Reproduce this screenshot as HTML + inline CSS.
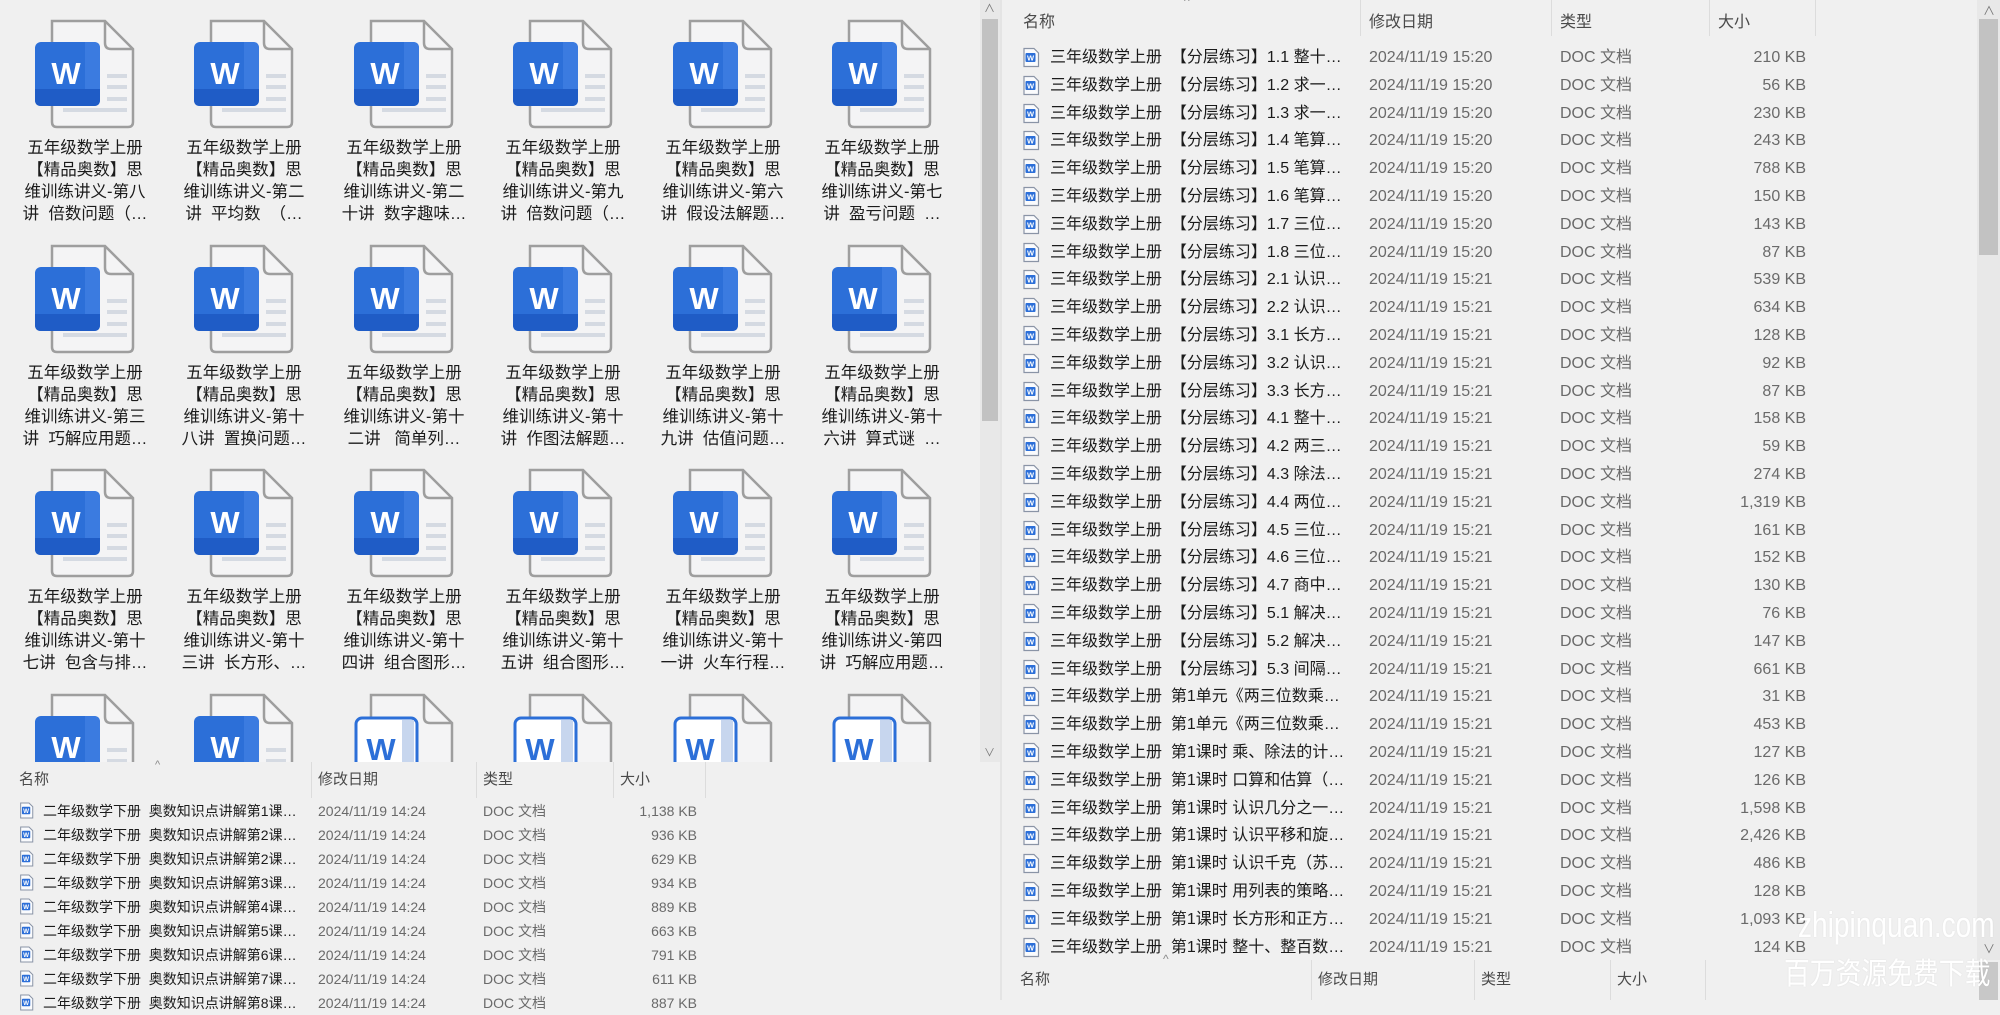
<!DOCTYPE html>
<html><head><meta charset="utf-8">
<style>
*{margin:0;padding:0;box-sizing:border-box}
body{width:2000px;height:1000px;overflow:hidden;background:#f0f0f0;font-family:"Liberation Sans","Noto Sans CJK SC",sans-serif;color:#1b1b1b;position:relative}
.a{position:absolute}
.ic{position:absolute;width:100px;height:110px}
.lb{position:absolute;width:150px;text-align:center;font-size:16.5px;line-height:22px;white-space:pre;color:#1b1b1b}
.r{position:absolute;font-size:16px;line-height:27.8px;white-space:pre}
.rb{position:absolute;height:24px;font-size:14px;line-height:24px;white-space:pre}
.g{color:#6a6a6a}
.hd{position:absolute;font-size:15px;color:#4a4a4a}
.sep{position:absolute;width:1px;background:#dcdcdc}
.si{position:absolute;width:18px;height:21px}
</style></head><body>
<svg width="0" height="0" style="position:absolute">
<defs>
<symbol id="big" viewBox="0 0 100 110">
<path d="M17 2 H70 L98 30 V103 Q98 108 93 108 H22 Q17 108 17 103 Z" fill="#f4f4f5" stroke="#9e9e9e" stroke-width="2.5"/>
<path d="M70 2 V24 Q70 30 76 30 H98" fill="none" stroke="#9e9e9e" stroke-width="2.5"/>
<path d="M72 57 H92 M72 68 H92 M72 80 H92 M28 91 H92" stroke="#d5dae2" stroke-width="4"/>
<rect x="0" y="23" width="65" height="64" rx="6" fill="#2c6fd8"/>
<path d="M0 70 H65 V81 Q65 87 59 87 H6 Q0 87 0 81 Z" fill="#1f5cc6"/>
<path d="M50 23 H59 Q65 23 65 29 V70 H50 Z" fill="#3b7be0"/>
<text x="31" y="65" font-family="Liberation Sans" font-weight="bold" font-size="31" fill="#fff" text-anchor="middle">W</text>
</symbol>
<symbol id="big2" viewBox="0 0 100 110">
<path d="M17 2 H70 L98 30 V103 Q98 108 93 108 H22 Q17 108 17 103 Z" fill="#f4f4f5" stroke="#9e9e9e" stroke-width="2.5"/>
<path d="M70 2 V24 Q70 30 76 30 H98" fill="none" stroke="#9e9e9e" stroke-width="2.5"/>
<rect x="2" y="25" width="61" height="62" rx="6" fill="#fff" stroke="#2c6fd8" stroke-width="3"/>
<rect x="48" y="27" width="12" height="58" fill="#c7d6ee"/>
<text x="27" y="67" font-family="Liberation Sans" font-weight="bold" font-size="31" fill="#2c6fd8" text-anchor="middle">W</text>
</symbol>
<symbol id="sm" viewBox="0 0 18 21">
<path d="M2 1.5 H12 L16.5 6 V19.5 H2 Z" fill="#fafbfd" stroke="#8a94a6" stroke-width="1.2"/>
<rect x="3.5" y="6" width="10" height="9" rx="1" fill="#2c6fd8"/>
<text x="8.5" y="13.5" font-family="Liberation Sans" font-weight="bold" font-size="7.5" fill="#fff" text-anchor="middle">W</text>
</symbol>
</defs></svg>

<div class="a" style="left:0;top:0;width:980px;height:762px;overflow:hidden;background:#f0f0f0">
<svg class="ic" style="left:35px;top:19px"><use href="#big"/></svg>
<svg class="ic" style="left:194px;top:19px"><use href="#big"/></svg>
<svg class="ic" style="left:354px;top:19px"><use href="#big"/></svg>
<svg class="ic" style="left:513px;top:19px"><use href="#big"/></svg>
<svg class="ic" style="left:673px;top:19px"><use href="#big"/></svg>
<svg class="ic" style="left:832px;top:19px"><use href="#big"/></svg>
<svg class="ic" style="left:35px;top:244px"><use href="#big"/></svg>
<svg class="ic" style="left:194px;top:244px"><use href="#big"/></svg>
<svg class="ic" style="left:354px;top:244px"><use href="#big"/></svg>
<svg class="ic" style="left:513px;top:244px"><use href="#big"/></svg>
<svg class="ic" style="left:673px;top:244px"><use href="#big"/></svg>
<svg class="ic" style="left:832px;top:244px"><use href="#big"/></svg>
<svg class="ic" style="left:35px;top:468px"><use href="#big"/></svg>
<svg class="ic" style="left:194px;top:468px"><use href="#big"/></svg>
<svg class="ic" style="left:354px;top:468px"><use href="#big"/></svg>
<svg class="ic" style="left:513px;top:468px"><use href="#big"/></svg>
<svg class="ic" style="left:673px;top:468px"><use href="#big"/></svg>
<svg class="ic" style="left:832px;top:468px"><use href="#big"/></svg>
<svg class="ic" style="left:35px;top:693px"><use href="#big"/></svg>
<svg class="ic" style="left:194px;top:693px"><use href="#big"/></svg>
<svg class="ic" style="left:354px;top:693px"><use href="#big2"/></svg>
<svg class="ic" style="left:513px;top:693px"><use href="#big2"/></svg>
<svg class="ic" style="left:673px;top:693px"><use href="#big2"/></svg>
<svg class="ic" style="left:832px;top:693px"><use href="#big2"/></svg>

<div class="lb" style="left:10px;top:137px">五年级数学上册
【精品奥数】思
维训练讲义-第八
讲  倍数问题（…</div>
<div class="lb" style="left:169px;top:137px">五年级数学上册
【精品奥数】思
维训练讲义-第二
讲  平均数  （…</div>
<div class="lb" style="left:329px;top:137px">五年级数学上册
【精品奥数】思
维训练讲义-第二
十讲  数字趣味…</div>
<div class="lb" style="left:488px;top:137px">五年级数学上册
【精品奥数】思
维训练讲义-第九
讲  倍数问题（…</div>
<div class="lb" style="left:648px;top:137px">五年级数学上册
【精品奥数】思
维训练讲义-第六
讲  假设法解题…</div>
<div class="lb" style="left:807px;top:137px">五年级数学上册
【精品奥数】思
维训练讲义-第七
讲  盈亏问题  …</div>

<div class="lb" style="left:10px;top:362px">五年级数学上册
【精品奥数】思
维训练讲义-第三
讲  巧解应用题…</div>
<div class="lb" style="left:169px;top:362px">五年级数学上册
【精品奥数】思
维训练讲义-第十
八讲  置换问题…</div>
<div class="lb" style="left:329px;top:362px">五年级数学上册
【精品奥数】思
维训练讲义-第十
二讲   简单列…</div>
<div class="lb" style="left:488px;top:362px">五年级数学上册
【精品奥数】思
维训练讲义-第十
讲  作图法解题…</div>
<div class="lb" style="left:648px;top:362px">五年级数学上册
【精品奥数】思
维训练讲义-第十
九讲  估值问题…</div>
<div class="lb" style="left:807px;top:362px">五年级数学上册
【精品奥数】思
维训练讲义-第十
六讲  算式谜  …</div>

<div class="lb" style="left:10px;top:586px">五年级数学上册
【精品奥数】思
维训练讲义-第十
七讲  包含与排…</div>
<div class="lb" style="left:169px;top:586px">五年级数学上册
【精品奥数】思
维训练讲义-第十
三讲  长方形、…</div>
<div class="lb" style="left:329px;top:586px">五年级数学上册
【精品奥数】思
维训练讲义-第十
四讲  组合图形…</div>
<div class="lb" style="left:488px;top:586px">五年级数学上册
【精品奥数】思
维训练讲义-第十
五讲  组合图形…</div>
<div class="lb" style="left:648px;top:586px">五年级数学上册
【精品奥数】思
维训练讲义-第十
一讲  火车行程…</div>
<div class="lb" style="left:807px;top:586px">五年级数学上册
【精品奥数】思
维训练讲义-第四
讲  巧解应用题…</div>
</div>
<div class="a" style="left:980px;top:0;width:20px;height:762px;background:#e8e8e8"></div>
<div class="a" style="left:982px;top:19px;width:16px;height:402px;background:#c2c2c2"></div>
<div class="a" style="left:984px;top:0;font-size:11px;color:#777">∧</div>
<div class="a" style="left:984px;top:744px;font-size:11px;color:#777">∨</div>

<div class="a" style="left:0;top:762px;width:1000px;height:238px;background:#f0f0f0"></div>
<div class="a" style="left:155px;top:759px;font-size:11px;color:#888">^</div>
<div class="hd" style="left:19px;top:768px">名称</div>
<div class="hd" style="left:318px;top:768px">修改日期</div>
<div class="hd" style="left:483px;top:768px">类型</div>
<div class="hd" style="left:620px;top:768px">大小</div>
<div class="sep" style="left:311px;top:762px;height:36px"></div>
<div class="sep" style="left:476px;top:762px;height:36px"></div>
<div class="sep" style="left:613px;top:762px;height:36px"></div>
<div class="sep" style="left:705px;top:762px;height:36px"></div>

<div class="a" style="left:0;top:799px">
<svg class="si" style="left:19px;top:2px;width:15px;height:19px"><use href="#sm"/></svg>
<svg class="si" style="left:19px;top:26px;width:15px;height:19px"><use href="#sm"/></svg>
<svg class="si" style="left:19px;top:50px;width:15px;height:19px"><use href="#sm"/></svg>
<svg class="si" style="left:19px;top:74px;width:15px;height:19px"><use href="#sm"/></svg>
<svg class="si" style="left:19px;top:98px;width:15px;height:19px"><use href="#sm"/></svg>
<svg class="si" style="left:19px;top:122px;width:15px;height:19px"><use href="#sm"/></svg>
<svg class="si" style="left:19px;top:146px;width:15px;height:19px"><use href="#sm"/></svg>
<svg class="si" style="left:19px;top:170px;width:15px;height:19px"><use href="#sm"/></svg>
<svg class="si" style="left:19px;top:194px;width:15px;height:19px"><use href="#sm"/></svg>
<div class="rb" style="left:43px;top:0">二年级数学下册  奥数知识点讲解第1课…</div>
<div class="rb" style="left:43px;top:24px">二年级数学下册  奥数知识点讲解第2课…</div>
<div class="rb" style="left:43px;top:48px">二年级数学下册  奥数知识点讲解第2课…</div>
<div class="rb" style="left:43px;top:72px">二年级数学下册  奥数知识点讲解第3课…</div>
<div class="rb" style="left:43px;top:96px">二年级数学下册  奥数知识点讲解第4课…</div>
<div class="rb" style="left:43px;top:120px">二年级数学下册  奥数知识点讲解第5课…</div>
<div class="rb" style="left:43px;top:144px">二年级数学下册  奥数知识点讲解第6课…</div>
<div class="rb" style="left:43px;top:168px">二年级数学下册  奥数知识点讲解第7课…</div>
<div class="rb" style="left:43px;top:192px">二年级数学下册  奥数知识点讲解第8课…</div>
<div class="rb g" style="left:318px;top:0">2024/11/19 14:24</div>
<div class="rb g" style="left:318px;top:24px">2024/11/19 14:24</div>
<div class="rb g" style="left:318px;top:48px">2024/11/19 14:24</div>
<div class="rb g" style="left:318px;top:72px">2024/11/19 14:24</div>
<div class="rb g" style="left:318px;top:96px">2024/11/19 14:24</div>
<div class="rb g" style="left:318px;top:120px">2024/11/19 14:24</div>
<div class="rb g" style="left:318px;top:144px">2024/11/19 14:24</div>
<div class="rb g" style="left:318px;top:168px">2024/11/19 14:24</div>
<div class="rb g" style="left:318px;top:192px">2024/11/19 14:24</div>
<div class="rb g" style="left:483px;top:0">DOC 文档</div>
<div class="rb g" style="left:483px;top:24px">DOC 文档</div>
<div class="rb g" style="left:483px;top:48px">DOC 文档</div>
<div class="rb g" style="left:483px;top:72px">DOC 文档</div>
<div class="rb g" style="left:483px;top:96px">DOC 文档</div>
<div class="rb g" style="left:483px;top:120px">DOC 文档</div>
<div class="rb g" style="left:483px;top:144px">DOC 文档</div>
<div class="rb g" style="left:483px;top:168px">DOC 文档</div>
<div class="rb g" style="left:483px;top:192px">DOC 文档</div>
<div class="rb g" style="left:597px;width:100px;text-align:right;top:0">1,138 KB</div>
<div class="rb g" style="left:597px;width:100px;text-align:right;top:24px">936 KB</div>
<div class="rb g" style="left:597px;width:100px;text-align:right;top:48px">629 KB</div>
<div class="rb g" style="left:597px;width:100px;text-align:right;top:72px">934 KB</div>
<div class="rb g" style="left:597px;width:100px;text-align:right;top:96px">889 KB</div>
<div class="rb g" style="left:597px;width:100px;text-align:right;top:120px">663 KB</div>
<div class="rb g" style="left:597px;width:100px;text-align:right;top:144px">791 KB</div>
<div class="rb g" style="left:597px;width:100px;text-align:right;top:168px">611 KB</div>
<div class="rb g" style="left:597px;width:100px;text-align:right;top:192px">887 KB</div>
</div>

<div class="a" style="left:1000px;top:0;width:2px;height:1000px;background:#e4e4e4"></div>
<div class="a" style="left:1184px;top:-6px;font-size:12px;color:#888">^</div>
<div class="hd" style="left:1023px;top:8px;font-size:16px">名称</div>
<div class="hd" style="left:1369px;top:8px;font-size:16px">修改日期</div>
<div class="hd" style="left:1560px;top:8px;font-size:16px">类型</div>
<div class="hd" style="left:1718px;top:8px;font-size:16px">大小</div>
<div class="sep" style="left:1360px;top:0;height:36px"></div>
<div class="sep" style="left:1551px;top:0;height:36px"></div>
<div class="sep" style="left:1709px;top:0;height:36px"></div>
<div class="sep" style="left:1815px;top:0;height:36px"></div>

<div class="a" style="left:0;top:44px">
<svg class="si" style="left:1022px;top:3px"><use href="#sm"/></svg>
<svg class="si" style="left:1022px;top:31px"><use href="#sm"/></svg>
<svg class="si" style="left:1022px;top:59px"><use href="#sm"/></svg>
<svg class="si" style="left:1022px;top:86px"><use href="#sm"/></svg>
<svg class="si" style="left:1022px;top:114px"><use href="#sm"/></svg>
<svg class="si" style="left:1022px;top:142px"><use href="#sm"/></svg>
<svg class="si" style="left:1022px;top:170px"><use href="#sm"/></svg>
<svg class="si" style="left:1022px;top:198px"><use href="#sm"/></svg>
<svg class="si" style="left:1022px;top:225px"><use href="#sm"/></svg>
<svg class="si" style="left:1022px;top:253px"><use href="#sm"/></svg>
<svg class="si" style="left:1022px;top:281px"><use href="#sm"/></svg>
<svg class="si" style="left:1022px;top:309px"><use href="#sm"/></svg>
<svg class="si" style="left:1022px;top:337px"><use href="#sm"/></svg>
<svg class="si" style="left:1022px;top:364px"><use href="#sm"/></svg>
<svg class="si" style="left:1022px;top:392px"><use href="#sm"/></svg>
<svg class="si" style="left:1022px;top:420px"><use href="#sm"/></svg>
<svg class="si" style="left:1022px;top:448px"><use href="#sm"/></svg>
<svg class="si" style="left:1022px;top:476px"><use href="#sm"/></svg>
<svg class="si" style="left:1022px;top:503px"><use href="#sm"/></svg>
<svg class="si" style="left:1022px;top:531px"><use href="#sm"/></svg>
<svg class="si" style="left:1022px;top:559px"><use href="#sm"/></svg>
<svg class="si" style="left:1022px;top:587px"><use href="#sm"/></svg>
<svg class="si" style="left:1022px;top:615px"><use href="#sm"/></svg>
<svg class="si" style="left:1022px;top:642px"><use href="#sm"/></svg>
<svg class="si" style="left:1022px;top:670px"><use href="#sm"/></svg>
<svg class="si" style="left:1022px;top:698px"><use href="#sm"/></svg>
<svg class="si" style="left:1022px;top:726px"><use href="#sm"/></svg>
<svg class="si" style="left:1022px;top:754px"><use href="#sm"/></svg>
<svg class="si" style="left:1022px;top:781px"><use href="#sm"/></svg>
<svg class="si" style="left:1022px;top:809px"><use href="#sm"/></svg>
<svg class="si" style="left:1022px;top:837px"><use href="#sm"/></svg>
<svg class="si" style="left:1022px;top:865px"><use href="#sm"/></svg>
<svg class="si" style="left:1022px;top:893px"><use href="#sm"/></svg>

<div class="r" style="left:1050px;top:0">三年级数学上册  【分层练习】1.1 整十…
三年级数学上册  【分层练习】1.2 求一…
三年级数学上册  【分层练习】1.3 求一…
三年级数学上册  【分层练习】1.4 笔算…
三年级数学上册  【分层练习】1.5 笔算…
三年级数学上册  【分层练习】1.6 笔算…
三年级数学上册  【分层练习】1.7 三位…
三年级数学上册  【分层练习】1.8 三位…
三年级数学上册  【分层练习】2.1 认识…
三年级数学上册  【分层练习】2.2 认识…
三年级数学上册  【分层练习】3.1 长方…
三年级数学上册  【分层练习】3.2 认识…
三年级数学上册  【分层练习】3.3 长方…
三年级数学上册  【分层练习】4.1 整十…
三年级数学上册  【分层练习】4.2 两三…
三年级数学上册  【分层练习】4.3 除法…
三年级数学上册  【分层练习】4.4 两位…
三年级数学上册  【分层练习】4.5 三位…
三年级数学上册  【分层练习】4.6 三位…
三年级数学上册  【分层练习】4.7 商中…
三年级数学上册  【分层练习】5.1 解决…
三年级数学上册  【分层练习】5.2 解决…
三年级数学上册  【分层练习】5.3 间隔…
三年级数学上册  第1单元《两三位数乘…
三年级数学上册  第1单元《两三位数乘…
三年级数学上册  第1课时 乘、除法的计…
三年级数学上册  第1课时 口算和估算（…
三年级数学上册  第1课时 认识几分之一…
三年级数学上册  第1课时 认识平移和旋…
三年级数学上册  第1课时 认识千克（苏…
三年级数学上册  第1课时 用列表的策略…
三年级数学上册  第1课时 长方形和正方…
三年级数学上册  第1课时 整十、整百数…</div>
<div class="r g" style="left:1369px;top:0">2024/11/19 15:20
2024/11/19 15:20
2024/11/19 15:20
2024/11/19 15:20
2024/11/19 15:20
2024/11/19 15:20
2024/11/19 15:20
2024/11/19 15:20
2024/11/19 15:21
2024/11/19 15:21
2024/11/19 15:21
2024/11/19 15:21
2024/11/19 15:21
2024/11/19 15:21
2024/11/19 15:21
2024/11/19 15:21
2024/11/19 15:21
2024/11/19 15:21
2024/11/19 15:21
2024/11/19 15:21
2024/11/19 15:21
2024/11/19 15:21
2024/11/19 15:21
2024/11/19 15:21
2024/11/19 15:21
2024/11/19 15:21
2024/11/19 15:21
2024/11/19 15:21
2024/11/19 15:21
2024/11/19 15:21
2024/11/19 15:21
2024/11/19 15:21
2024/11/19 15:21</div>
<div class="r g" style="left:1560px;top:0">DOC 文档
DOC 文档
DOC 文档
DOC 文档
DOC 文档
DOC 文档
DOC 文档
DOC 文档
DOC 文档
DOC 文档
DOC 文档
DOC 文档
DOC 文档
DOC 文档
DOC 文档
DOC 文档
DOC 文档
DOC 文档
DOC 文档
DOC 文档
DOC 文档
DOC 文档
DOC 文档
DOC 文档
DOC 文档
DOC 文档
DOC 文档
DOC 文档
DOC 文档
DOC 文档
DOC 文档
DOC 文档
DOC 文档</div>
<div class="r g" style="left:1700px;width:106px;text-align:right;top:0">210 KB
56 KB
230 KB
243 KB
788 KB
150 KB
143 KB
87 KB
539 KB
634 KB
128 KB
92 KB
87 KB
158 KB
59 KB
274 KB
1,319 KB
161 KB
152 KB
130 KB
76 KB
147 KB
661 KB
31 KB
453 KB
127 KB
126 KB
1,598 KB
2,426 KB
486 KB
128 KB
1,093 KB
124 KB</div>
</div>

<div class="a" style="left:1977px;top:0;width:23px;height:960px;background:#e8e8e8"></div>
<div class="a" style="left:1979px;top:19px;width:19px;height:236px;background:#c2c2c2"></div>
<div class="a" style="left:1983px;top:2px;font-size:12px;color:#777">∧</div>
<div class="a" style="left:1983px;top:940px;font-size:12px;color:#777">∨</div>

<div class="a" style="left:1002px;top:960px;width:998px;height:40px;background:#f0f0f0"></div>
<div class="a" style="left:1163px;top:952px;font-size:12px;color:#888">^</div>
<div class="hd" style="left:1020px;top:968px">名称</div>
<div class="hd" style="left:1318px;top:968px">修改日期</div>
<div class="hd" style="left:1481px;top:968px">类型</div>
<div class="hd" style="left:1617px;top:968px">大小</div>
<div class="sep" style="left:1311px;top:960px;height:40px"></div>
<div class="sep" style="left:1474px;top:960px;height:40px"></div>
<div class="sep" style="left:1610px;top:960px;height:40px"></div>
<div class="sep" style="left:1705px;top:960px;height:40px"></div>
<div class="a" style="left:1979px;top:962px;width:19px;height:38px;background:#c8c8c8"></div>

<div class="a" style="left:1798px;top:903px;font-size:36px;color:#fff;line-height:44px;white-space:nowrap;transform:scaleX(0.78);transform-origin:0 0;text-shadow:0 0 2px rgba(0,0,0,.08)">zhipinquan.com</div>
<div class="a" style="left:1784px;top:953px;font-size:30px;color:#fff;line-height:44px;white-space:nowrap;transform:scaleX(0.86);transform-origin:0 0;text-shadow:0 0 2px rgba(0,0,0,.08)">百万资源免费下载</div>
</body></html>
